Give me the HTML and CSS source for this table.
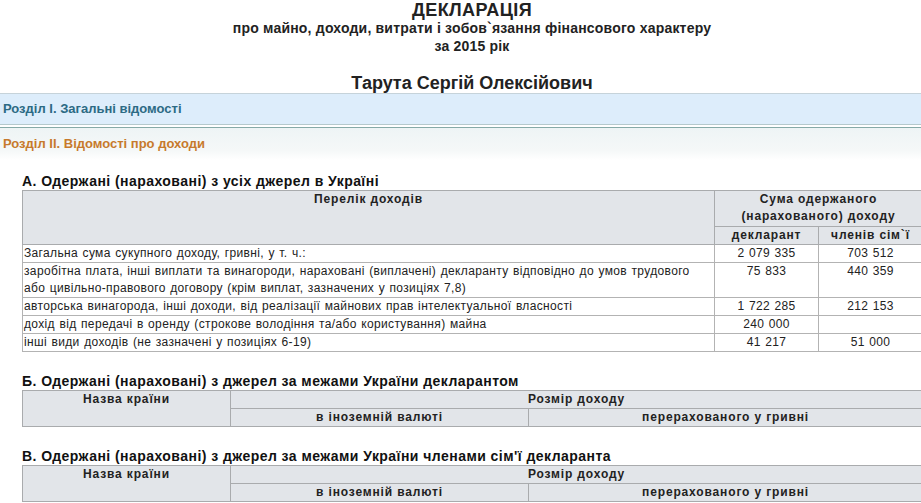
FILE: index.html
```html
<!DOCTYPE html>
<html lang="uk">
<head>
<meta charset="utf-8">
<title>Декларація</title>
<link rel="stylesheet" href="styles.css">
</head>
<body>
<header class="doc-head">
  <h1 class="doc-title">ДЕКЛАРАЦІЯ</h1>
  <p class="doc-sub">про майно, доходи, витрати і зобов`язання фінансового характеру</p>
  <p class="doc-sub">за 2015 рік</p>
  <h2 class="doc-name">Тарута Сергій Олексійович</h2>
</header>
<div class="section section-one">Розділ І. Загальні відомості</div>
<div class="section section-two">Розділ ІІ. Відомості про доходи</div>
<main class="content">
  <h3 class="block-title">А. Одержані (нараховані) з усіх джерел в Україні</h3>
  <table class="grid grid-a">
    <colgroup><col class="c-list"><col class="c-num"><col class="c-num"></colgroup>
    <thead>
      <tr><th rowspan="2">Перелік доходів</th><th colspan="2" class="th-tall">Сума одержаного<br>(нарахованого) доходу</th></tr>
      <tr><th>декларант</th><th>членів сім`ї</th></tr>
    </thead>
    <tbody>
      <tr><td>Загальна сума сукупного доходу, гривні, у т. ч.:</td><td class="num">2 079 335</td><td class="num">703 512</td></tr>
      <tr><td>заробітна плата, інші виплати та винагороди, нараховані (виплачені) декларанту відповідно до умов трудового<br>або цивільно-правового договору (крім виплат, зазначених у позиціях 7,8)</td><td class="num">75 833</td><td class="num">440 359</td></tr>
      <tr><td>авторська винагорода, інші доходи, від реалізації майнових прав інтелектуальної власності</td><td class="num">1 722 285</td><td class="num">212 153</td></tr>
      <tr><td>дохід від передачі в оренду (строкове володіння та/або користування) майна</td><td class="num">240 000</td><td class="num"></td></tr>
      <tr><td>інші види доходів (не зазначені у позиціях 6-19)</td><td class="num">41 217</td><td class="num">51 000</td></tr>
    </tbody>
  </table>

  <h3 class="block-title">Б. Одержані (нараховані) з джерел за межами України декларантом</h3>
  <table class="grid grid-b">
    <colgroup><col class="c-country"><col class="c-cur"><col class="c-uah"></colgroup>
    <thead>
      <tr><th rowspan="2">Назва країни</th><th colspan="2">Розмір доходу</th></tr>
      <tr><th>в іноземній валюті</th><th>перерахованого у гривні</th></tr>
    </thead>
  </table>

  <h3 class="block-title">В. Одержані (нараховані) з джерел за межами України членами сім'ї декларанта</h3>
  <table class="grid grid-b">
    <colgroup><col class="c-country"><col class="c-cur"><col class="c-uah"></colgroup>
    <thead>
      <tr><th rowspan="2">Назва країни</th><th colspan="2">Розмір доходу</th></tr>
      <tr><th>в іноземній валюті</th><th>перерахованого у гривні</th></tr>
    </thead>
  </table>
</main>
</body>
</html>
```
FILE: styles.css
```css
html, body {
  margin: 0;
  padding: 0;
  overflow: hidden;
  background: #fff;
}
body {
  font-family: "Liberation Sans", Arial, sans-serif;
  color: #222;
  width: 944px;
}
.doc-head {
  text-align: center;
  padding-top: 1px;
}
.doc-title {
  margin: 0;
  font-size: 18px;
  line-height: 18px;
  font-weight: bold;
  color: #222;
  letter-spacing: 0.4px;
}
.doc-sub {
  margin: 0;
  font-size: 14px;
  line-height: 18px;
  font-weight: bold;
  color: #222;
  letter-spacing: 0.2px;
}
.doc-name {
  margin: 18px 0 0;
  font-size: 18px;
  line-height: 20px;
  font-weight: bold;
  color: #222;
}
.section {
  font-size: 13px;
  font-weight: bold;
  padding-left: 3px;
}
.section-one {
  margin-top: 0;
  height: 30px;
  line-height: 30px;
  background: #ddedfb;
  border-top: 1px solid #c6d3da;
  border-bottom: 1px solid #b5c9cc;
  color: #2c6a84;
}
.section-two {
  margin-top: 2px;
  height: 32px;
  line-height: 32px;
  border-top: 1px solid #86aaa8;
  background: linear-gradient(#eef4f5, #f5f8f8 70%, #fff);
  color: #c77a2c;
}
.content {
  padding-left: 22px;
}
.block-title {
  margin: 0;
  font-size: 14px;
  line-height: 17px;
  font-weight: bold;
  color: #111;
  letter-spacing: 0.45px;
}
.grid-a + .block-title,
.grid-b + .block-title {
  margin-top: 21px;
}
.content > .block-title:first-child {
  margin-top: 13px;
}
.grid {
  border-collapse: collapse;
  width: 900px;
  table-layout: fixed;
  font-size: 12px;
  line-height: 17px;
}
.grid th {
  background: #e2e5e9;
  border: 1px solid #a9abad;
  font-weight: bold;
  color: #222;
  text-align: center;
  vertical-align: top;
  padding: 0;
  letter-spacing: 0.85px;
}
.grid th.th-tall {
  padding-bottom: 1px;
}
.grid td {
  border: 1px solid #b3b3b3;
  padding: 0 1px;
  vertical-align: top;
  color: #222;
  letter-spacing: 0.35px;
  word-spacing: 0.8px;
}
.grid td.num {
  text-align: center;
}
.c-list { width: 692px; }
.c-num { width: 104px; }
.c-country { width: 208px; }
.c-cur { width: 298px; }
.c-uah { width: 394px; }
```
